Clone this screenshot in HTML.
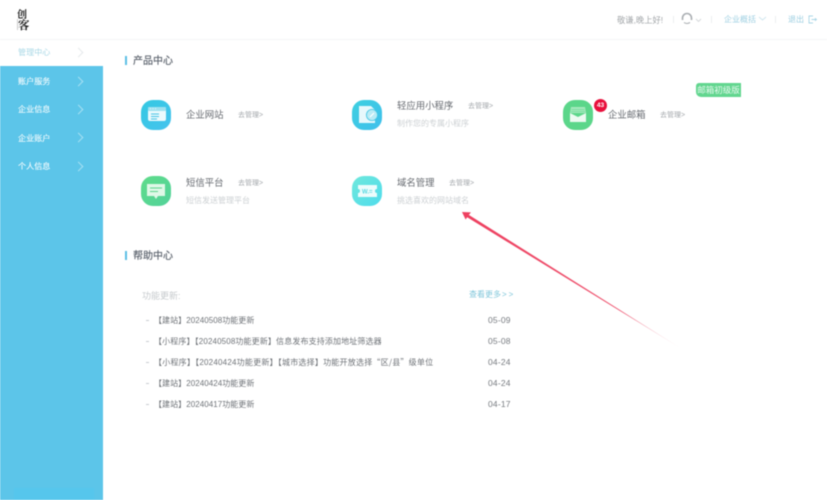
<!DOCTYPE html>
<html lang="zh-CN">
<head>
<meta charset="utf-8">
<title>管理中心</title>
<style>
html,body{margin:0;padding:0;background:#fff}
body{width:827px;height:500px;position:relative;overflow:hidden;font-family:"Liberation Sans","Noto Sans CJK SC",sans-serif;color:#666;filter:blur(.4px)}
.t{position:absolute;white-space:nowrap;line-height:16px}
.hd{position:absolute;left:0;top:0;width:827px;height:39px;border-bottom:1px solid #f4f5f6}
.side{position:absolute;left:0;top:66px;width:103px;height:434px;background:#5cc5e9}
.nav{font-size:8.1px;color:#f0fafd;left:18px;text-shadow:0 0 .3px #f0fafd}
.chev{position:absolute;width:6px;height:6px;border-top:1px solid #a5e0f3;border-right:1px solid #a5e0f3;transform:rotate(45deg);left:75px}
.bar{position:absolute;left:125px;width:2px;height:9px;background:#5cbfe4}
.h2{font-size:10px;color:#5f6670;left:133px;text-shadow:0 0 .5px #5f6670}
.ic{position:absolute;width:30px;height:30px;border-radius:12px}
.name{font-size:9.4px;color:#666a70}
.go{font-size:7px;color:#a3a7ab}
.sub{font-size:8px;color:#ccd0d3}
.li{font-size:8px;color:#6f7378;left:154px}
.cj{font-family:"Noto Sans CJK SC",sans-serif}
.dt{font-size:8.5px;color:#777b80;left:488px;letter-spacing:.2px}
.dot{position:absolute;left:146px;width:3px;height:1px;background:#c9ccd0}
.top{font-size:8.3px;color:#a4a8ab}
.top2{font-size:8px;color:#9fd0e2}
.sep{position:absolute;top:16px;width:1px;height:7px;background:#eceef0}
</style>
</head>
<body>
<div class="hd"></div>
<div class="t" style="left:17px;top:8px;font:700 10px/11px 'Noto Serif CJK SC','Liberation Serif',serif;color:#222">创</div>
<div class="t" style="left:18px;top:19px;font:700 11.5px/12px 'Noto Serif CJK SC','Liberation Serif',serif;color:#222">客</div>
<div style="position:absolute;left:17px;top:19px;width:1px;height:11px;background:#ccc"></div>

<div class="t top" style="left:617px;top:12px">敬谦,晚上好!</div>
<div class="sep" style="left:673px"></div>
<svg style="position:absolute;left:681px;top:12px" width="22" height="13" viewBox="0 0 22 13" fill="none" stroke="#a9adb1"><path d="M1.5 8V6a4.5 4.5 0 0 1 9 0v2" stroke-width="1.6"/><path d="M3 10.5c1.5 1.2 4 1.2 6 0" stroke-width="1.1"/><path d="M15 7l2.5 2.5L20 7" stroke="#d4d7da" stroke-width=".9"/></svg>
<div class="sep" style="left:711px"></div>
<div class="t top2" style="left:724px;top:12px">企业概括</div>
<svg style="position:absolute;left:758px;top:16px" width="9" height="6" viewBox="0 0 9 6" fill="none" stroke="#cfe6ef"><path d="M1 1l3.5 3L8 1"/></svg>
<div class="sep" style="left:775px"></div>
<div class="t top2" style="left:788px;top:12px">退出</div>
<svg style="position:absolute;left:808px;top:15px" width="9" height="9" viewBox="0 0 9 9" fill="none" stroke="#a9d6e6" stroke-width=".9"><path d="M5 1H1v7h4M3.5 4.5H8.5M7 3.2L8.5 4.5 7 5.8"/></svg>

<div class="t" style="left:18px;top:45px;font-size:8.1px;color:#a9d8e6">管理中心</div>
<div class="chev" style="left:75px;top:49px;border-color:#e6eaec"></div>
<div class="side"></div>
<div class="t nav" style="top:74px">账户服务</div><div class="chev" style="top:78px"></div>
<div class="t nav" style="top:102px">企业信息</div><div class="chev" style="top:106px"></div>
<div class="t nav" style="top:131px">企业账户</div><div class="chev" style="top:134px"></div>
<div class="t nav" style="top:159px">个人信息</div><div class="chev" style="top:163px"></div>
<div style="position:absolute;left:14px;top:488px;width:80px;height:12px;background:#56c6ec"></div>

<div class="bar" style="top:56px"></div>
<div class="t h2" style="top:54px">产品中心</div>

<div class="ic" style="left:141px;top:100px;background:linear-gradient(135deg,#34c9e2,#46c3ee)"></div>
<svg style="position:absolute;left:147px;top:106px" width="20" height="16" viewBox="0 0 20 16"><rect x="1" y="1" width="18" height="14" rx="2" fill="#ecfafd"/><rect x="1" y="1" width="18" height="4" rx="1" fill="#9fe1f0"/><path d="M3 2.8h1M5.5 2.8h1M8 2.8h1" stroke="#ecfafd"/><path d="M4 8h8M4 10.5h8M4 13h6" stroke="#45c4e6" stroke-width="1"/></svg>
<div class="t name" style="left:186px;top:107px">企业网站</div>
<div class="t go" style="left:238px;top:108px">去管理&gt;</div>

<div class="ic" style="left:352px;top:100px;background:linear-gradient(135deg,#3ed0e0,#3fbfec)"></div>
<svg style="position:absolute;left:358px;top:105px" width="22" height="19" viewBox="0 0 22 19"><path d="M1 1h12l4 4v13H1z" fill="#e6f8fc"/><circle cx="14" cy="10" r="5.6" fill="#b9ebf5" stroke="#3fc6e6" stroke-width=".8"/><path d="M12 12l4-4" stroke="#fff" stroke-width="1.2"/></svg>
<div class="t name" style="left:397px;top:98px">轻应用小程序</div>
<div class="t go" style="left:468px;top:99px">去管理&gt;</div>
<div class="t sub" style="left:397px;top:116px">制作您的专属小程序</div>

<div class="ic" style="left:563px;top:100px;background:#5bd68a"></div>
<svg style="position:absolute;left:568px;top:105px" width="20" height="20" viewBox="0 0 20 20"><path d="M3 2h14l1 6H2z" fill="#a5e9bd"/><path d="M3.5 4.5h13M3 6.5h14" stroke="#6fdc98" stroke-width=".7"/><path d="M2 8l8 4 8-4v9H2z" fill="#ecfaf1"/></svg>
<div style="position:absolute;left:594px;top:99px;width:13px;height:13px;border-radius:50%;background:#e8103c;color:#fff;font:700 6.5px/13px 'Liberation Sans',sans-serif;text-align:center">43</div>
<div class="t name" style="left:608px;top:107px">企业邮箱</div>
<div class="t go" style="left:660px;top:108px">去管理&gt;</div>
<div class="t" style="left:696px;top:83px;width:45px;height:14px;background:#62d68f;border-radius:3px 0 0 5px;color:#e6f9ee;font-size:8.5px;line-height:14px;text-align:center">邮箱初级版</div>

<div class="ic" style="left:141px;top:176px;background:linear-gradient(135deg,#5fdc8a,#52d29a)"></div>
<svg style="position:absolute;left:146px;top:183px" width="20" height="17" viewBox="0 0 20 17"><path d="M1 1h18v12h-7l-2 3-2-3H1z" fill="#dff8e7"/><path d="M4 5h12M4 8.5h8" stroke="#5cd68e" stroke-width="1"/></svg>
<div class="t name" style="left:186px;top:175px">短信平台</div>
<div class="t go" style="left:238px;top:176px">去管理&gt;</div>
<div class="t sub" style="left:186px;top:193px">短信发送管理平台</div>

<div class="ic" style="left:352px;top:176px;background:linear-gradient(135deg,#6fe8dc,#4fdcec)"></div>
<svg style="position:absolute;left:357px;top:184px" width="21" height="14" viewBox="0 0 21 14"><path d="M1 1h19v4a2 2 0 0 0 0 4v4H1V9a2 2 0 0 0 0-4z" fill="#ecfcfc"/><text x="5" y="9.5" font-family="Liberation Sans" font-size="6" font-weight="700" fill="#57d9e2">W.=</text></svg>
<div class="t name" style="left:397px;top:175px">域名管理</div>
<div class="t go" style="left:449px;top:176px">去管理&gt;</div>
<div class="t sub" style="left:397px;top:193px">挑选喜欢的网站域名</div>

<svg style="position:absolute;left:455px;top:205px" width="235" height="150" viewBox="455 205 235 150">
<defs><linearGradient id="a" gradientUnits="userSpaceOnUse" x1="463" y1="213" x2="680" y2="347"><stop offset="0" stop-color="#ee3f5f"/><stop offset=".72" stop-color="#ee5570"/><stop offset="1" stop-color="#ee8a9c" stop-opacity=".2"/></linearGradient></defs>
<path d="M462 212l9 .4-2.2 2.5L680 347.8 467.2 217.3l-1.6 2.2z" fill="url(#a)"/>
</svg>

<div class="bar" style="top:251px"></div>
<div class="t h2" style="top:249px">帮助中心</div>

<div class="t" style="left:142px;top:288px;font-size:9px;color:#c6cacd">功能更新:</div>
<div class="t" style="left:469px;top:287px;font-size:8px;color:#7fc6da">查看更多<span style="letter-spacing:2px;margin-left:1px">&gt;&gt;</span></div>

<div class="dot" style="top:320px"></div><div class="t li" style="top:313px;letter-spacing:.05px">【建站】20240508功能更新</div><div class="t dt" style="top:312px">05-09</div>
<div class="dot" style="top:341px"></div><div class="t li" style="top:334px;letter-spacing:.13px">【小程序】【20240508功能更新】信息发布支持添加地址筛选器</div><div class="t dt" style="top:333px">05-08</div>
<div class="dot" style="top:362px"></div><div class="t li" style="top:355px;letter-spacing:.22px">【小程序】【20240424功能更新】【城市选择】功能开放选择<span class="cj">“区/县”</span>级单位</div><div class="t dt" style="top:354px">04-24</div>
<div class="dot" style="top:383px"></div><div class="t li" style="top:376px;letter-spacing:.05px">【建站】20240424功能更新</div><div class="t dt" style="top:375px">04-24</div>
<div class="dot" style="top:404px"></div><div class="t li" style="top:397px;letter-spacing:.05px">【建站】20240417功能更新</div><div class="t dt" style="top:396px">04-17</div>
</body>
</html>
